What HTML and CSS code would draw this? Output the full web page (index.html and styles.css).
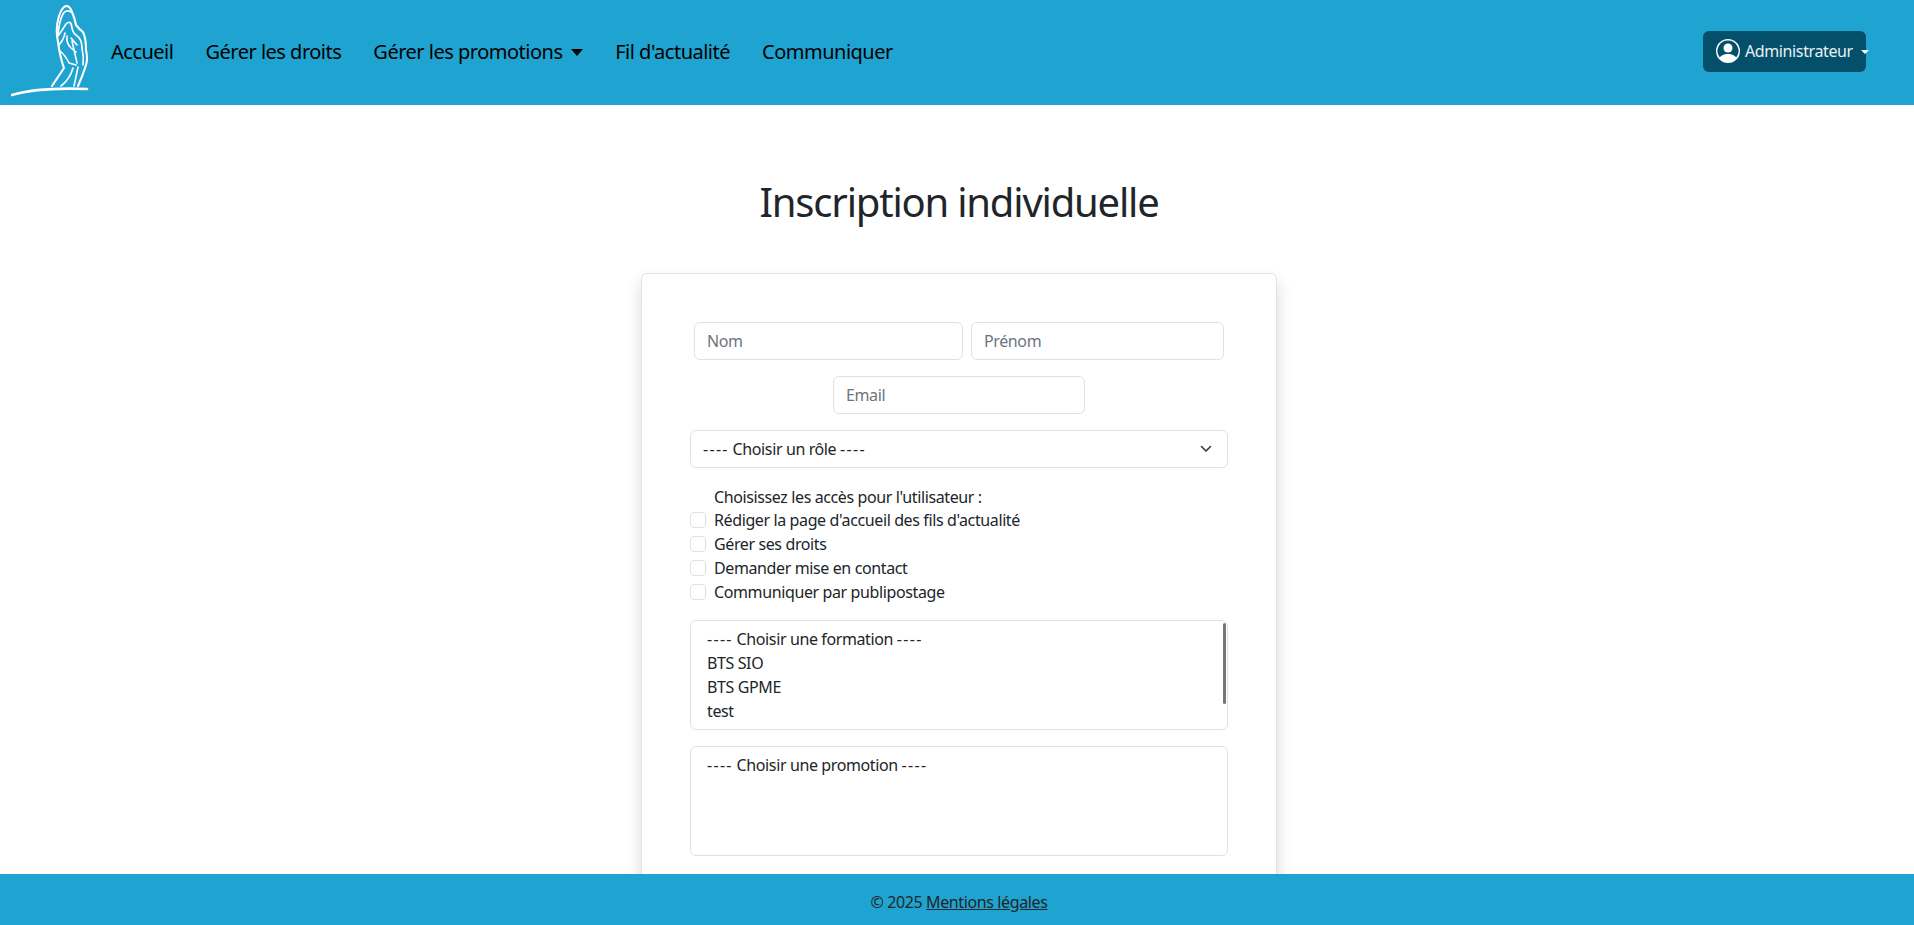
FILE: index.html
```html
<!DOCTYPE html>
<html lang="fr">
<head>
    <meta charset="UTF-8">
    <title>Inscription individuelle</title>
    <link rel="stylesheet" href="styles.css">
</head>
<body>
<nav class="topbar">
    <a class="logo" href="#">
        <svg width="80" height="96" viewBox="0 0 80 96" fill="none" stroke="#fff" stroke-linecap="round" stroke-linejoin="round">
            <path stroke-width="2.6" d="M1 90Q28 82 76 84"/>
            <path stroke-width="2.1" d="M41 81L53 63Q49 52 47 37Q44 24 48 11Q51 2 55 1Q59 1 61 7Q64 14 65 20Q68 24 72 27Q75 33 75 45Q77 54 75 60Q72 70 67 81"/>
            <path stroke-width="1.6" d="M47 31Q52 24 55 19Q60 14 61 23Q62 28 65 30M60 7Q55 4 52 9Q48 16 47 31M48 40Q53 34 54 28M49 46Q54 50 58 58L65 60M56 31Q55 38 60 43L65 47M60 33L66 40M65 30Q71 34 71 43Q73 52 72 60M61 36L66 58M62 63Q59 74 50 81M67 62Q65 72 63 81"/>
        </svg>
    </a>
    <ul class="menu">
        <li><a href="#">Accueil</a></li>
        <li><a href="#">Gérer les droits</a></li>
        <li><a href="#">Gérer les promotions <span class="caret"></span></a></li>
        <li><a href="#">Fil d'actualité</a></li>
        <li><a href="#">Communiquer</a></li>
    </ul>
    <button class="user-btn" type="button">
        <svg width="24" height="24" viewBox="0 0 16 16" fill="#fff">
            <path d="M11 6a3 3 0 1 1-6 0 3 3 0 0 1 6 0z"/>
            <path fill-rule="evenodd" d="M0 8a8 8 0 1 1 16 0A8 8 0 0 1 0 8zm8-7a7 7 0 0 0-5.468 11.37C3.242 11.226 4.805 10 8 10s4.757 1.225 5.468 2.37A7 7 0 0 0 8 1z"/>
        </svg>
        <span>Administrateur</span>
        <span class="caret caret-small"></span>
    </button>
</nav>

<main class="content">
    <h1 class="title">Inscription individuelle</h1>
    <form class="card">
        <div class="row">
            <input class="field field-nom" type="text" placeholder="Nom">
            <input class="field field-prenom" type="text" placeholder="Prénom">
        </div>
        <div class="row">
            <input class="field field-email" type="text" placeholder="Email">
        </div>
        <div class="field field-select">
            <span><span class="dash">----</span> Choisir un rôle <span class="dash">----</span></span>
            <svg width="12" height="8" viewBox="0 0 12 8" fill="none" stroke="#343a40" stroke-width="1.6" stroke-linecap="round" stroke-linejoin="round"><path d="m1.5 1.5 4.5 4.5 4.5-4.5"/></svg>
        </div>
        <div class="access">
            <p class="access-title">Choisissez les accès pour l'utilisateur :</p>
            <label class="check"><input type="checkbox"><span>Rédiger la page d'accueil des fils d'actualité</span></label>
            <label class="check"><input type="checkbox"><span>Gérer ses droits</span></label>
            <label class="check"><input type="checkbox"><span>Demander mise en contact</span></label>
            <label class="check"><input type="checkbox"><span>Communiquer par publipostage</span></label>
        </div>
        <div class="listbox">
            <div><span class="dash">----</span> Choisir une formation <span class="dash">----</span></div>
            <div>BTS SIO</div>
            <div>BTS GPME</div>
            <div>test</div>
            <span class="thumb"></span>
        </div>
        <div class="listbox">
            <div><span class="dash">----</span> Choisir une promotion <span class="dash">----</span></div>
        </div>
    </form>
</main>

<footer class="bottom">© 2025 <a href="#">Mentions légales</a></footer>
</body>
</html>
```

FILE: styles.css
```css
*{
    box-sizing:border-box;
}
html,body{
    height:100%;
}
body{
    margin:0;
    display:flex;
    flex-direction:column;
    overflow:hidden;
    background:#fff;
    color:#212529;
    font:16px/24px "Noto Sans",sans-serif;
    letter-spacing:-.024em;
}
a{
    color:inherit;
}

/* barre du haut */
.topbar{
    flex:none;
    height:105px;
    display:flex;
    align-items:center;
    background:#1fa3d0;
    padding:0 48px 0 11px;
}
.logo{
    display:block;
    height:96px;
    width:84px;
}
.menu{
    display:flex;
    margin:-2px 0 0;
    padding:0;
    list-style:none;
    flex:1;
}
.menu a{
    display:block;
    padding:8px 16px;
    color:#000;
    font-size:20px;
    letter-spacing:-.025em;
    text-decoration:none;
    white-space:nowrap;
}
.caret{
    display:inline-block;
    margin-left:4px;
    vertical-align:3px;
    border-top:7px solid #000;
    border-left:6px solid transparent;
    border-right:6px solid transparent;
}
.user-btn{
    width:163px;
    height:41px;
    display:flex;
    align-items:center;
    gap:5px;
    margin-top:-2px;
    padding:0 0 2px 13px;
    border:0;
    border-radius:6px;
    background:#04506b;
    color:#e9f1f4;
    font:inherit;
    letter-spacing:inherit;
    white-space:nowrap;
}
.user-btn svg{
    flex:none;
}
.caret-small{
    margin:2px 0 0 3px;
    vertical-align:0;
    border-top:4px solid #fff;
    border-left:4px solid transparent;
    border-right:4px solid transparent;
}

/* formulaire */
.content{
    flex:1;
    min-height:0;
    overflow:hidden;
    padding:0 0 0 4px;
}
.title{
    margin:73px 0 47px;
    height:48px;
    font-size:40px;
    line-height:48px;
    font-weight:400;
    letter-spacing:-.03em;
    text-align:center;
}
.card{
    width:636px;
    margin:0 auto;
    padding:48px 48px 40px;
    background:#fff;
    border:1px solid #e3e4e6;
    border-radius:6px;
    box-shadow:0 8px 16px rgba(0,0,0,.15);
}
.row{
    display:flex;
    justify-content:center;
    gap:8px;
    margin-bottom:16px;
}
.field{
    height:38px;
    padding:6px 12px;
    background:#fff;
    border:1px solid #dee2e6;
    border-radius:6px;
    color:#212529;
    font:inherit;
    letter-spacing:inherit;
    outline:0;
}
.field::placeholder{
    color:#6c757d;
}
.field-nom{
    width:269px;
}
.field-prenom{
    width:253px;
}
.field-email{
    width:252px;
}
.field-select{
    display:flex;
    justify-content:space-between;
    align-items:center;
    margin-bottom:17px;
    padding-right:15px;
}
.dash{
    letter-spacing:1.3px;
}
.access{
    margin-bottom:16px;
}
.access-title{
    margin:0 0 -1px;
    padding-left:24px;
}
.check{
    display:flex;
    align-items:center;
    gap:8px;
}
.check input{
    appearance:none;
    width:16px;
    height:16px;
    margin:0;
    border:1px solid #dee2e6;
    border-radius:4px;
    background:#fff;
}
.listbox{
    position:relative;
    height:110px;
    margin-bottom:16px;
    padding:6px 16px;
    border:1px solid #dee2e6;
    border-radius:6px;
}
.thumb{
    position:absolute;
    top:2px;
    right:1px;
    width:3px;
    height:81px;
    background:#777;
    border-radius:2px;
}

/* bas de page */
.bottom{
    flex:none;
    height:51px;
    padding-left:4px;
    line-height:57px;
    text-align:center;
    background:#1fa3d0;
}
```
